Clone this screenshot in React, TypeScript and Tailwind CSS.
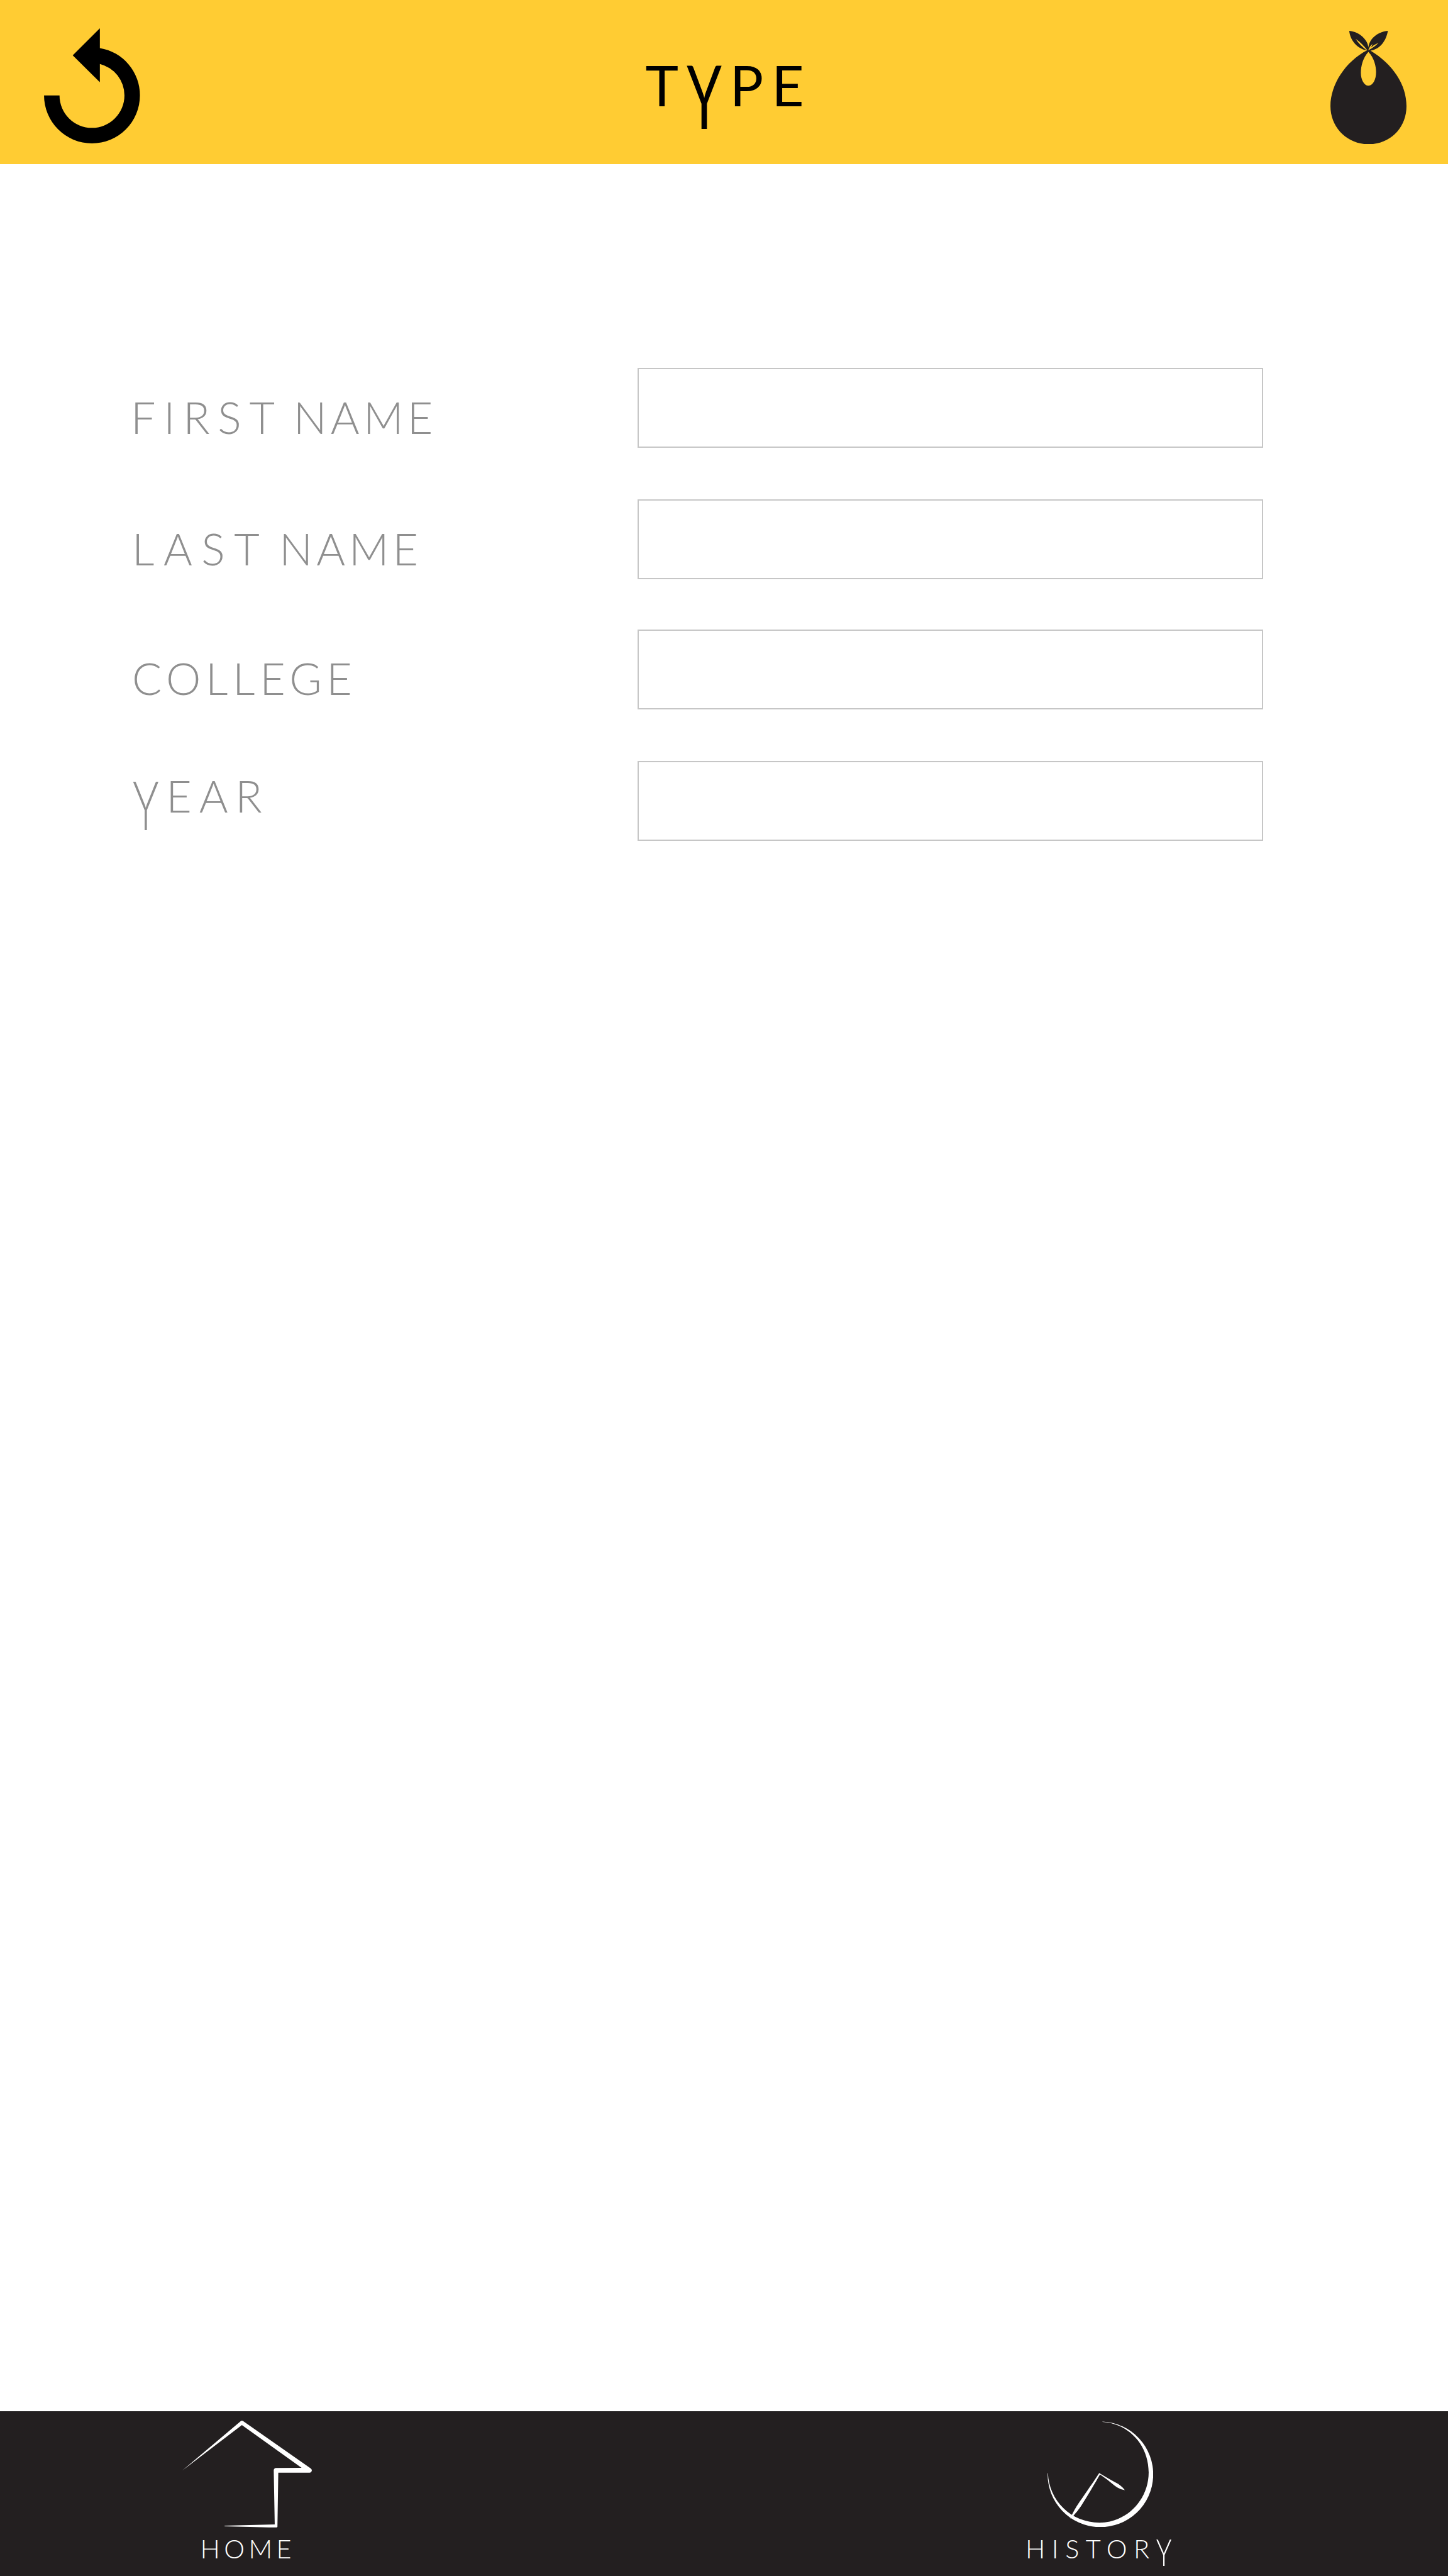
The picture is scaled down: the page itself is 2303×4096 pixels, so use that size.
import { Fragment } from "react";

type Word = { text: string; tracking: string };
type Field = { id: string; words: Word[]; label: string; row: string };

const fields: Field[] = [
  {
    id: "first-name",
    words: [
      { text: "FIRST", tracking: "tracking-[12.7px]" },
      { text: "NAME", tracking: "tracking-[6.2px]" },
    ],
    label: "pl-[208px] pt-[43px] [word-spacing:-2px]",
    row: "h-[209px]",
  },
  {
    id: "last-name",
    words: [
      { text: "LAST", tracking: "tracking-[14.5px]" },
      { text: "NAME", tracking: "tracking-[6px]" },
    ],
    label: "pl-[210px] pt-[43px] [word-spacing:-2px]",
    row: "h-[207px]",
  },
  {
    id: "college",
    words: [{ text: "COLLEGE", tracking: "tracking-[7.6px]" }],
    label: "pl-[210px] pt-[42px]",
    row: "h-[209px]",
  },
  {
    id: "year",
    words: [{ text: "YEAR", tracking: "tracking-[11.7px]" }],
    label: "pl-[211px] pt-[20px]",
    row: "h-[127px]",
  },
];

/** Sets a word with the Y's tail dropping below the baseline. */
function Lettering({ text, drop = "scale-y-[1.56]" }: { text: string; drop?: string }) {
  return (
    <>
      {text.split(/(Y)/).map((part, i) =>
        part === "Y" ? (
          <span key={i} className={`inline-block origin-[50%_17%] ${drop}`}>
            Y
          </span>
        ) : (
          <Fragment key={i}>{part}</Fragment>
        ),
      )}
    </>
  );
}

function BackIcon() {
  return (
    <svg viewBox="129 80 675 810" className="block h-[183px] w-[152.6px]" fill="#000">
      <path d="M331 270 L522 80 V219 A337 337 0 0 1 804 553 A337.5 337.5 0 0 1 129 552 H238 A228.500 228.500 0 0 0 695 553 A228 228 0 0 0 522 331 V460 Z" />
    </svg>
  );
}

function BagIcon() {
  return (
    <svg viewBox="122 95 535 798" className="block h-[180.4px] w-[121px]" fillRule="evenodd" fill="#231f20">
      <path d="M254 95 C330 103 385 160 389 212 C395 160 440 105 526 95 C515 165 470 225 404 234 C560 330 657 470 657 625 C657 775 545 893 390 893 C240 893 122 775 122 625 C122 470 230 310 379 232 C320 225 262 170 254 95 Z M389 243 C350 285 336 345 336 390 C336 440 360 481 390 481 C420 481 443 440 443 385 C443 345 430 285 389 243 Z" />
      <path
        fill="#ffcc33"
        d="M299 151 Q345 183 381 231 L375 231 Q325 192 299 151 Z M389 229 Q398 203 418 187 Q415 202 405 214 Q428 193 460 179 Q438 205 390 231 Z"
      />
    </svg>
  );
}

function HomeIcon() {
  return (
    <svg viewBox="84 138 912 752" className="block h-[170px] w-[206.2px]" fill="#fff">
      <path d="M84 489 L495 141 Q503 136 512 141 L986 473 Q996 480 995 490 Q992 503 979 504 H759 L753 884 Q752 889 747 889 L693 889 L381 881 V877 L734 868 L727 487 Q728 473 741 471 L923 470 L503 169 Z" />
    </svg>
  );
}

function HistoryIcon() {
  return (
    <svg viewBox="228 140 744 746" className="block h-[168.6px] w-[168.2px]" fill="#fff">
      <path d="M615 142 A371.500 371.500 0 1 1 229 505 L231 505 C238 697 393 853 595 853 C785 853 940 694 940 500 C940 302 795 155 615 144 Z" />
      <path d="M592 504 L600 510 C560 580 510 665 465 735 Q440 772 409 806 L388 826 L402 794 Q430 738 475 677 C520 610 560 555 592 504 Z" />
      <path d="M595 506 Q680 557 725 580 Q758 603 772 625 Q738 621 700 592 Q650 550 594 512 Z" />
    </svg>
  );
}

export default function App() {
  return (
    <div className="flex h-[4096px] w-[2303px] flex-col overflow-hidden bg-white font-['Lato',sans-serif]">
      <header className="flex h-[261px] shrink-0 items-start bg-[#ffcc33] pl-[70px] pr-[66px]">
        <button aria-label="Back" className="pt-[45px]">
          <BackIcon />
        </button>
        <h1 className="ml-[804px] pt-[90px] text-[89px] leading-none font-normal tracking-[13px] text-black">
          <Lettering text="TYPE" />
        </h1>
        <button aria-label="Bag" className="ml-auto pt-[48.6px]">
          <BagIcon />
        </button>
      </header>

      <main className="flex flex-1 flex-col pt-[324px]">
        {fields.map((field) => (
          <div key={field.id} className={`flex items-start ${field.row}`}>
            <label
              htmlFor={field.id}
              className={`w-[1014px] shrink-0 text-[70px] leading-none font-light whitespace-nowrap text-[#8f8f8f] ${field.label}`}
            >
              {field.words.map((word, i) => (
                <Fragment key={word.text}>
                  {i > 0 && " "}
                  <span className={word.tracking}>
                    <Lettering text={word.text} />
                  </span>
                </Fragment>
              ))}
            </label>
            <input id={field.id} className="h-[127px] w-[995px] border-2 border-[#c6c6c6] bg-white px-6 text-[60px] outline-none" />
          </div>
        ))}
      </main>

      <footer className="flex h-[262px] shrink-0 items-start bg-[#231f20] text-[41.5px] leading-none font-light text-white">
        <a className="ml-[290px] flex w-[207px] flex-col pt-[15.4px]">
          <HomeIcon />
          <span className="mt-[13px] pl-[28.5px] tracking-[6.4px]">HOME</span>
        </a>
        <a className="ml-[1134px] flex flex-col pt-[15.700px]">
          <span className="pl-[34.6px]">
            <HistoryIcon />
          </span>
          <span className="mt-[14px] tracking-[10.5px]">
            <Lettering text="HISTORY" drop="scale-y-[1.4]" />
          </span>
        </a>
      </footer>
    </div>
  );
}
